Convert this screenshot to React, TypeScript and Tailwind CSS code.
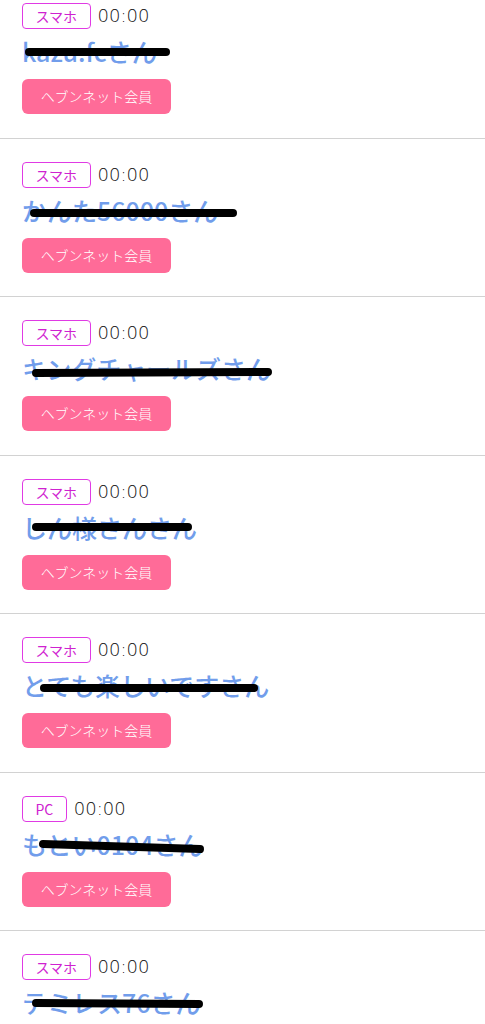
import React from "react";

type Row = {
  device: string;
  name: string;
  // redaction stroke, in px relative to the name line
  line: [number, number, number, number];
};

const rows: Row[] = [
  { device: "スマホ", name: "kazu.fcさん", line: [7, 17, 144, 17] },
  { device: "スマホ", name: "かんた56000さん", line: [12, 19, 211, 19] },
  { device: "スマホ", name: "キングチャールズさん", line: [14, 21, 246, 20] },
  { device: "スマホ", name: "しん様さんさん", line: [14, 16, 166, 16] },
  { device: "スマホ", name: "とても楽しいですさん", line: [22, 19, 232, 19] },
  { device: "PC", name: "もとい0104さん", line: [21, 16, 178, 21] },
  { device: "スマホ", name: "テミレス76さん", line: [14, 17, 177, 18] },
];

const font = { fontFamily: '"Noto Sans CJK JP", "Noto Sans", sans-serif' };

const Entry = ({ row }: { row: Row }) => {
  const [x1, y1, x2, y2] = row.line;
  return (
    <li className="border-b-[1.5px] border-[#d2d2d2] pl-[22px] pt-[23px] pb-[23.5px]">
      {/* 端末バッジ + 時刻 */}
      <div className="flex items-center">
        <span className="flex h-[26px] items-center rounded-[4px] border-[1.5px] border-[#e03ae4] px-[12.5px] text-[14px] leading-none text-[#cf22d0]">
          {row.device}
        </span>
        <span className="ml-[7px] font-['DejaVu_Sans',sans-serif] text-[18px] font-light leading-none text-[#111]">
          00:00
        </span>
      </div>

      {/* 名前（黒線で伏せ字） */}
      <div className="relative mt-[6px] mb-[12px] h-[32px]">
        <span className="text-[25px] font-medium leading-[32px] whitespace-nowrap text-[#719deb]">
          {row.name}
        </span>
        <svg className="absolute inset-0 h-full w-full overflow-visible" aria-hidden>
          <line x1={x1} y1={y1} x2={x2} y2={y2} stroke="#000" strokeWidth={8} strokeLinecap="round" />
        </svg>
      </div>

      <button className="flex h-[35px] w-[149px] items-center justify-center rounded-[6px] bg-[#ff6b98] text-[14px] font-light text-white">
        ヘブンネット会員
      </button>
    </li>
  );
};

export default function App() {
  return (
    <div className="h-[1024px] overflow-hidden bg-white" style={font}>
      <ul className="-mt-[20px]">
        {rows.map((r, i) => (
          <Entry key={i} row={r} />
        ))}
      </ul>
    </div>
  );
}
